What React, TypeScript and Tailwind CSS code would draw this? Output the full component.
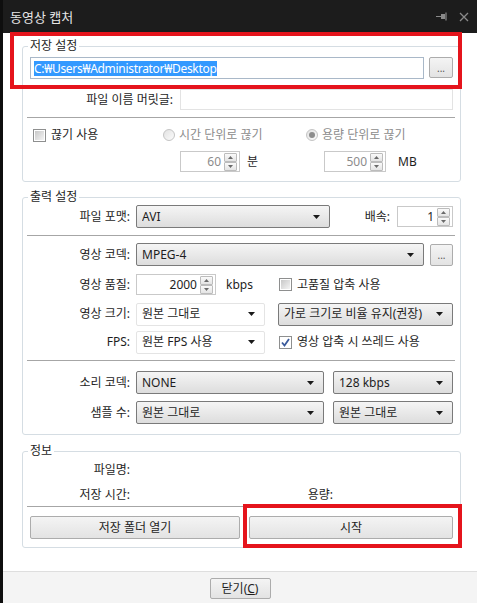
import clsx from 'clsx'

function Caret() {
  return (
    <svg width="7" height="4" viewBox="0 0 7 4" className="shrink-0">
      <path d="M0 0h7L3.5 4z" fill="#1a1a1a" />
    </svg>
  )
}

function Select({ value, className, flat }: { value: string; className?: string; flat?: boolean }) {
  return (
    <div
      className={clsx(
        'flex h-[23px] items-center rounded-[2px] border pl-[5px] pr-[9px]',
        flat ? 'border-[#e4e4e4] bg-white' : 'border-[#7a7a7a] bg-linear-to-b from-[#f5f5f5] to-[#dddddd]',
        className,
      )}
    >
      <span className="flex-1 truncate">{value}</span>
      <Caret />
    </div>
  )
}

function SpinBtn({ up }: { up?: boolean }) {
  return (
    <span className="flex h-[9px] w-[13px] items-center justify-center rounded-[1px] border border-[#bcbcbc] bg-linear-to-b from-[#fafafa] to-[#e4e4e4]">
      <svg width="5" height="3" viewBox="0 0 5 3">
        <path d={up ? 'M0 3h5L2.5 0z' : 'M0 0h5L2.5 3z'} fill="#6a6a6a" />
      </svg>
    </span>
  )
}

function Spin({ value, className }: { value: string; className?: string }) {
  return (
    <div className={clsx('flex h-[21px] items-center border border-[#c9c9c9] bg-white pr-[2px]', className)}>
      <span className="flex-1 pr-[3px] text-right">{value}</span>
      <div className="flex flex-col">
        <SpinBtn up />
        <SpinBtn />
      </div>
    </div>
  )
}

function Check({ checked }: { checked?: boolean }) {
  return (
    <span className="flex h-[13px] w-[13px] shrink-0 items-center justify-center border border-[#8e8f8f] bg-white">
      {checked ? (
        <svg width="9" height="9" viewBox="0 0 9 9">
          <path d="M1 4.5l2.5 3L8 1" stroke="#3a5a9c" strokeWidth="1.8" fill="none" />
        </svg>
      ) : (
        <span className="h-[9px] w-[9px] bg-linear-to-br from-[#c8c8c8] to-[#f4f4f4]" />
      )}
    </span>
  )
}

function Radio({ checked }: { checked?: boolean }) {
  return (
    <span className="flex h-[12px] w-[12px] shrink-0 items-center justify-center rounded-full border border-[#c4c4c4] bg-linear-to-br from-[#e2e2e2] to-[#fbfbfb]">
      {checked && <span className="h-[6px] w-[6px] rounded-full bg-[#8d8d8d]" />}
    </span>
  )
}

function Btn({ children, className }: { children: React.ReactNode; className?: string }) {
  return (
    <div
      className={clsx(
        'flex items-center justify-center rounded-[2px] border border-[#acacac] bg-linear-to-b from-[#f4f4f4] to-[#e3e3e3]',
        className,
      )}
    >
      {children}
    </div>
  )
}

function Sep() {
  return <div className="ml-[-3px] mr-[-2px] h-px bg-[#a6a6a6]" />
}

function Group({ title, className, children }: { title: string; className?: string; children: React.ReactNode }) {
  return (
    <fieldset className={clsx('ml-[19px] mr-[16px] rounded-[3px] border border-[#d5dde3] px-[7px]', className)}>
      <legend className="ml-[-2px] px-[2px] leading-[14px]">{title}</legend>
      {children}
    </fieldset>
  )
}

export default function App() {
  return (
    <div className="relative flex h-[603px] w-[477px] overflow-hidden bg-[#0e0e0e] text-[12px] leading-[16px] text-[#1e1e1e] font-['Noto_Sans','Noto_Sans_CJK_KR',sans-serif]">
      <div className="w-[3px]" />
      <div className="flex flex-1 flex-col">
        <div className="flex h-[33px] items-center bg-[#1c1c1c] pl-[7px] pr-[8px]">
          <span className="text-[13px] text-[#e6e6e6]">동영상 캡처</span>
          <div className="ml-auto flex items-center gap-[12px]">
            <svg width="11" height="9" viewBox="0 0 11 9">
              <path d="M0 4.5h5" stroke="#8a8a8a" strokeWidth="1" />
              <rect x="5" y="2" width="4" height="5" fill="#8a8a8a" />
              <path d="M10 0.5v8" stroke="#8a8a8a" strokeWidth="1.2" />
            </svg>
            <svg width="10" height="10" viewBox="0 0 10 10">
              <path d="M1 1l8 8M9 1l-8 8" stroke="#8a8a8a" strokeWidth="1.3" />
            </svg>
          </div>
        </div>

        <div className="flex flex-1 flex-col bg-white">
          <Group title="저장 설정" className="mt-[6px] pb-[9px]">
            <div className="mt-[4px] flex h-[22px] items-stretch">
              <div className="flex flex-1 items-center border border-[#a9b8c8] pl-[3px]">
                <span className="bg-[#3399ff] leading-[15px] tracking-[-0.3px] text-white">C:₩Users₩Administrator₩Desktop</span>
              </div>
              <Btn className="ml-[5px] h-[21px] w-[24px] text-[10px] text-[#555]">...</Btn>
            </div>
            <div className="mt-[10px] flex h-[21px] items-center">
              <span className="w-[143px] text-right">파일 이름 머릿글:</span>
              <div className="ml-[7px] h-full flex-1 border border-[#e3e3e3]" />
            </div>
            <div className="mt-[7px]">
              <Sep />
            </div>
            <div className="mt-[9px] grid grid-cols-[133px_143px_1fr] gap-y-[8px]">
              <div className="flex h-[16px] items-center gap-[5px] pl-[3px]">
                <Check />
                <span>끊기 사용</span>
              </div>
              <div className="flex h-[16px] items-center gap-[4px] text-[#8c8c8c]">
                <Radio />
                <span>시간 단위로 끊기</span>
              </div>
              <div className="flex h-[16px] items-center gap-[4px] text-[#8c8c8c]">
                <Radio checked />
                <span>용량 단위로 끊기</span>
              </div>
              <div />
              <div className="flex items-center pl-[17px]">
                <Spin value="60" className="w-[60px] text-[#8c8c8c]" />
                <span className="ml-[7px]">분</span>
              </div>
              <div className="flex items-center pl-[18px]">
                <Spin value="500" className="w-[62px] text-[#8c8c8c]" />
                <span className="ml-[12px]">MB</span>
              </div>
            </div>
          </Group>

          <Group title="출력 설정" className="mt-[8px] pb-[10px]">
            <div className="mt-[1px] flex h-[23px] items-center">
              <span className="w-[100px] text-right">파일 포맷:</span>
              <Select value="AVI" className="ml-[6px] w-[194px]" />
              <span className="ml-auto">배속:</span>
              <Spin value="1" className="ml-[7px] w-[56px]" />
            </div>
            <div className="mt-[7px]">
              <Sep />
            </div>
            <div className="mt-[7px] flex h-[23px] items-center">
              <span className="w-[100px] text-right">영상 코덱:</span>
              <Select value="MPEG-4" className="ml-[6px] flex-1" />
              <Btn className="ml-[6px] h-[22px] w-[23px] text-[10px] text-[#555]">...</Btn>
            </div>
            <div className="mt-[8px] flex h-[21px] items-center">
              <span className="w-[100px] text-right">영상 품질:</span>
              <div className="ml-[6px] flex w-[143px] items-center">
                <Spin value="2000" className="w-[80px]" />
                <span className="ml-[10px]">kbps</span>
              </div>
              <div className="flex items-center gap-[5px]">
                <Check />
                <span>고품질 압축 사용</span>
              </div>
            </div>
            <div className="mt-[8px] flex h-[22px] items-center">
              <span className="w-[100px] text-right">영상 크기:</span>
              <Select value="원본 그대로" flat className="ml-[6px] h-[22px] w-[129px]" />
              <Select value="가로 크기로 비율 유지(권장)" className="ml-[13px] h-[22px] flex-1 pr-[6px]" />
            </div>
            <div className="mt-[6px] flex h-[22px] items-center">
              <span className="w-[100px] text-right">FPS:</span>
              <Select value="원본 FPS 사용" flat className="ml-[6px] h-[22px] w-[129px]" />
              <div className="ml-[14px] flex items-center gap-[5px]">
                <Check checked />
                <span>영상 압축 시 쓰레드 사용</span>
              </div>
            </div>
            <div className="mt-[7px]">
              <Sep />
            </div>
            <div className="mt-[10px] flex h-[23px] items-center">
              <span className="w-[100px] text-right">소리 코덱:</span>
              <Select value="NONE" className="ml-[6px] w-[188px]" />
              <Select value="128 kbps" className="ml-[9px] flex-1" />
            </div>
            <div className="mt-[7px] flex h-[23px] items-center">
              <span className="w-[100px] text-right">샘플 수:</span>
              <Select value="원본 그대로" className="ml-[6px] w-[188px]" />
              <Select value="원본 그대로" className="ml-[9px] flex-1" />
            </div>
          </Group>

          <Group title="정보" className="mt-[9px] pb-[8px]">
            <div className="mt-[4px] flex h-[16px] items-center">
              <span className="w-[100px] text-right">파일명:</span>
            </div>
            <div className="mt-[9px] flex h-[16px] items-center">
              <span className="w-[100px] text-right">저장 시간:</span>
              <span className="w-[203px] text-right">용량:</span>
            </div>
            <div className="mt-[3px]">
              <Sep />
            </div>
            <div className="mt-[9px] flex h-[23px] gap-[9px]">
              <Btn className="w-[210px]">저장 폴더 열기</Btn>
              <Btn className="flex-1">시작</Btn>
            </div>
          </Group>

          <div className="mt-auto flex h-[32px] justify-center border-t border-[#dedede] bg-[#f4f4f4] pt-[6px]">
            <Btn className="h-[21px] w-[61px] border-[#a8a8a8]">
              닫기(<span className="underline">C</span>)
            </Btn>
          </div>
        </div>
      </div>

      <div className="pointer-events-none absolute left-[10px] top-[32px] h-[57px] w-[452px] border-4 border-[#e5141c]" />
      <div className="pointer-events-none absolute left-[243px] top-[504px] h-[44px] w-[219px] border-4 border-[#e5141c]" />
    </div>
  )
}
